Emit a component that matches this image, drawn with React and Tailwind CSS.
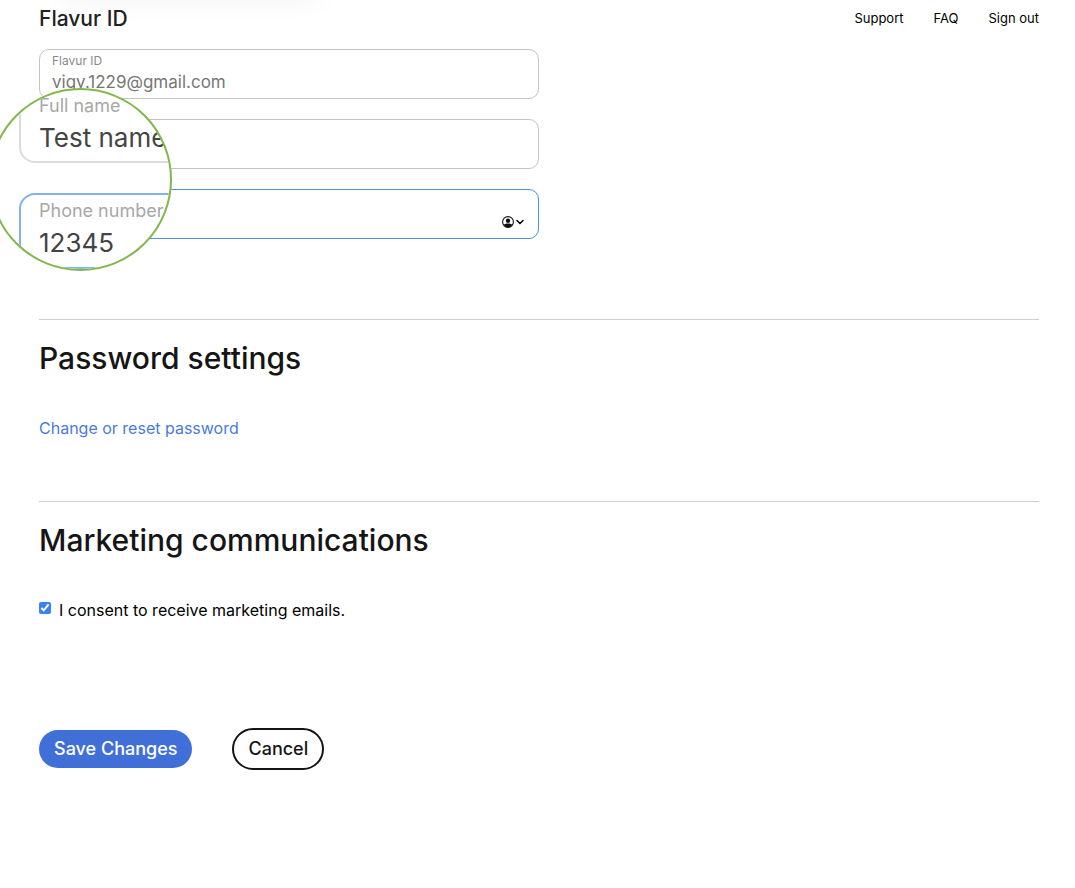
import { ChevronDown } from "lucide-react";

const links = ["Support", "FAQ", "Sign out"];

function ContactIcon() {
  return (
    <svg viewBox="0 0 24 24" className="h-3 w-3" aria-hidden="true">
      <circle cx="12" cy="12" r="10.8" fill="none" stroke="#111" strokeWidth="2.2" />
      <circle cx="12" cy="9.5" r="4.4" fill="#111" />
      <path d="M3 17.5C6 15.6 9 15 12 15s6 .6 9 2.5A10.8 10.8 0 0 1 12 23 10.800 10.800 0 0 1 3 17.500z" fill="#111" />
    </svg>
  );
}

function LensField({ id, label, value, type = "text", className }) {
  return (
    <div className={`rounded-2xl border-2 px-[18px] ${className}`}>
      <label htmlFor={id} className="block text-lg leading-6 text-[#a8a8a8]">
        {label}
      </label>
      <input
        id={id}
        type={type}
        defaultValue={value}
        className="block h-10 w-full bg-transparent text-[26px] leading-10 text-[#444] outline-none"
      />
    </div>
  );
}

// Round magnifier lying over the name and phone boxes, it holds their inputs
function Magnifier() {
  return (
    <div className="absolute -left-[11px] top-[88px] h-[183px] w-[183px] overflow-hidden rounded-full border-2 border-[#82b74b] bg-white">
      <div className="-mt-[2px] ml-7 flex w-[300px] flex-col gap-[30px]">
        <LensField
          id="full-name"
          label="Full name"
          value="Test name"
          className="h-[75px] rounded-t-none border-t-0 border-[#dcdcdc] pt-[6px]"
        />
        <LensField
          id="phone"
          label="Phone number"
          value="12345"
          type="tel"
          className="h-[76px] border-[#80b3ee] pt-1"
        />
      </div>
    </div>
  );
}

function Section({ title, children }) {
  return (
    <section className="border-t border-[#cfcfcf] pt-[18px]">
      <h2 className="text-[30px] font-medium leading-10 text-[#151515]">{title}</h2>
      {children}
    </section>
  );
}

export default function App() {
  return (
    <div className="relative min-h-screen overflow-hidden bg-white pl-[39px] pr-9 font-['Inter',sans-serif] text-black">
      <div className="pointer-events-none absolute -top-5 left-[60px] h-4 w-[260px] shadow-[0_4px_24px_rgba(0,0,0,0.06)]" />

      <header className="flex h-[37px] items-center justify-between">
        <h1 className="text-[21px] font-medium leading-7 text-[#222]">Flavur ID</h1>
        <nav className="flex gap-[30px] text-[13px]">
          {links.map((link) => (
            <a key={link} href="#" className="hover:underline">
              {link}
            </a>
          ))}
        </nav>
      </header>

      <form onSubmit={(e) => e.preventDefault()}>
        <div className="flex max-w-[500px] flex-col gap-5 pb-20 pt-3">
          <div className="flex h-[50px] flex-col rounded-[10px] border border-[#c4c4c4] px-3 pt-[3px]">
            <label htmlFor="flavur-id" className="text-xs leading-4 text-[#8a8a8a]">
              Flavur ID
            </label>
            <input
              id="flavur-id"
              type="email"
              defaultValue="vigy.1229@gmail.com"
              disabled
              className="h-[26px] w-full bg-transparent text-[17px] leading-6 text-[#777]"
            />
          </div>
          <div className="h-[50px] rounded-[10px] border border-[#c4c4c4]" />
          <div className="flex h-[50px] items-end justify-end rounded-[10px] border border-[#4a90e2] pb-[10px] pr-3">
            <button type="button" aria-label="Autofill contact" className="flex items-center">
              <ContactIcon />
              <ChevronDown size={12} strokeWidth={3} />
            </button>
          </div>
        </div>

        <Section title="Password settings">
          <a href="#" className="mb-[61px] mt-[38px] inline-block text-base leading-6 text-[#4a7bdc]">
            Change or reset password
          </a>
        </Section>

        <Section title="Marketing communications">
          <label className="mt-[38px] flex items-center gap-2 text-base leading-6">
            <input type="checkbox" defaultChecked className="mb-1 h-3 w-3 accent-[#3b82f6]" />
            I consent to receive marketing emails.
          </label>
        </Section>

        <div className="flex items-center gap-10 pt-[106px]">
          <button
            type="submit"
            className="h-[38px] rounded-full bg-[#416fd8] px-[15px] text-lg font-medium text-white"
          >
            Save Changes
          </button>
          <button
            type="button"
            className="h-[42px] rounded-full border-2 border-[#151515] px-[14px] text-lg font-medium text-[#151515]"
          >
            Cancel
          </button>
        </div>
      </form>

      <Magnifier />
    </div>
  );
}
